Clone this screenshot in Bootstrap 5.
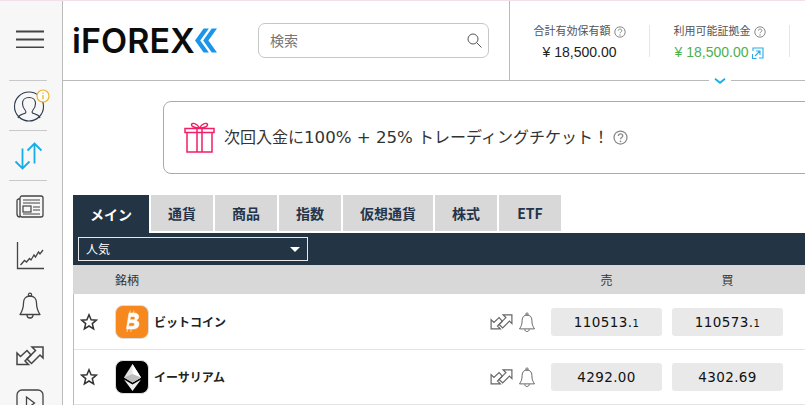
<!DOCTYPE html>
<html lang="ja">
<head>
  <meta charset="UTF-8">
  <title>iFOREX</title>
  <link href="https://cdn.jsdelivr.net/npm/bootstrap@5.3.0/dist/css/bootstrap.min.css" rel="stylesheet">
  <style>
    html, body { height: 405px; overflow: hidden; }
    body {
      background: #fff;
      border-top: 1px solid #f1dfe9;
      font-family: "Liberation Sans", "Noto Sans CJK JP", sans-serif;
      color: #222;
    }
    .app-shell { height: 404px; }
    .side-rail {
      width: 63px;
      flex: 0 0 63px;
      background: #f7f7f7;
      border-right: 1px solid #bbb;
      padding-top: 27px;
      overflow: hidden;
    }
    .rail-item { height: 50px; display: flex; align-items: center; justify-content: center; flex: 0 0 auto; }
    .rail-first { height: 53px; flex: 0 0 auto; border-bottom: 1px solid #c8c8c8; margin: 0 15px 0 9px; padding-left: 3px; }
    .rail-line { border-bottom: 1px solid #c8c8c8; margin: 0 15px 0 9px; padding-left: 2px; }
    .rail-plain { padding-right: 3px; }
    .rail-user { overflow: visible; }
    .main-pane { width: 742px; flex: 0 0 742px; overflow: hidden; }
    .top-bar { height: 80px; border-bottom: 1px solid #bbb; position: relative; flex: 0 0 auto; }
    .brand-box { width: 195px; padding-left: 9px; }
    .brand-word { font-family: "Inter", sans-serif; font-weight: 600; font-size: 34px; line-height: 1; letter-spacing: .1px; color: #0c0c0c; }
    .search-box { width: 231px; height: 35px; margin-top: 22px; position: relative; }
    .search-box .form-control {
      height: 35px; border: 1px solid #c6c6c6; border-radius: 7px; padding: 0 30px 0 11px; font-size: 14px;
    }
    .search-box .form-control::placeholder { color: #757575; }
    .search-glass { position: absolute; right: 6px; top: 9px; }
    .stats-box { margin-left: 20px; border-left: 1px solid #bbb; height: 79px; padding-top: 24px; }
    .stat-cell { width: 140px; height: 32px; border-right: 1px solid #e6e6e6; text-align: center; }
    .stat-label { font-size: 11px; line-height: 15px; color: #555; display: flex; justify-content: center; align-items: center; gap: 3px; height: 13px; }
    .stat-value { font-size: 14px; line-height: 16px; margin-top: 6px; color: #222; }
    .stat-green { color: #4caf50; }
    .stat-green svg { vertical-align: -2px; }
    .expand-tab { position: absolute; left: 646px; top: 75px; width: 22px; height: 10px; background: #fff; display: flex; justify-content: center; align-items: center; }
    .promo-box {
      margin: 20px 0 0 100px; width: 700px; height: 73px;
      border: 1px solid #aaa; border-radius: 8px; padding-left: 20px; gap: 9px;
      color: #333; flex: 0 0 auto;
    }
    .promo-text { font-family: "Noto Sans CJK JP", sans-serif; font-size: 16px; }
    .promo-num { font-family: "DejaVu Sans", sans-serif; font-size: 16.600px; }
    .promo-help { margin-left: -5px; flex-shrink: 0; }
    .market-wrap { margin: 21px 0 0 10px; width: 740px; flex: 0 0 auto; }
    .market-tabs { gap: 2px; height: 38px; }
    .market-tab {
      height: 36px; width: 62px; background: #d8d8d8; color: #24344a; font-weight: 700; font-size: 14px;
      display: flex; align-items: center; justify-content: center; font-family: "Noto Sans CJK JP", sans-serif;
    }
    .market-tab-on { height: 38px; width: 76px; background: #233444; color: #fff; }
    .market-tab-wide { width: 90px; }
    .filter-bar { background: #233444; height: 32px; padding: 4px 5px; }
    .filter-pick {
      width: 230px; height: 24px; border: 1px solid #e8e8e8; color: #fff; font-size: 12px;
      font-family: "Noto Sans CJK JP", sans-serif; padding: 0 7px 0 7px;
    }
    .filter-caret { width: 0; height: 0; border-left: 5.500px solid transparent; border-right: 5.500px solid transparent; border-top: 5.500px solid #fff; }
    .quote-list { border-left: 1px solid #bbb; }
    .quote-head { background: #d8d8d8; height: 29px; margin-bottom: 1px; font-size: 12px; color: #333; font-family: "Noto Sans CJK JP", sans-serif; margin-left: -1px; }
    .col-name { width: 478px; padding-left: 42px; }
    .col-price { width: 111px; margin-right: 10px; text-align: center; }
    .quote-row { height: 55px; border-bottom: 1px solid #e4e4e4; }
    .star-cell { width: 41px; flex: 0 0 41px; padding-left: 6px; display: flex; }
    .coin-logo { width: 34px; height: 34px; flex: 0 0 34px; border-radius: 8px; display: flex; align-items: center; justify-content: center; border: 1px solid #ddd; }
    .coin-orange { background: #f7881d; }
    .coin-black { background: #000; }
    .coin-name { width: 341px; flex: 0 0 341px; padding-left: 5px; font-weight: 700; font-size: 12px; font-family: "Noto Sans CJK JP", sans-serif; color: #222; }
    .tool-cell { width: 61px; flex: 0 0 61px; gap: 5px; color: #666; }
    .price-btn {
      width: 111px; flex: 0 0 111px; height: 28px; margin-right: 10px; padding: 0; border: 0; border-radius: 3px; background: #e9e9e9;
      font-family: "DejaVu Sans", sans-serif; font-size: 13.500px; line-height: 28px; color: #111; letter-spacing: .4px;
    }
    .price-small { font-size: 10px; }
    .rail-ink { color: #444; }
  </style>
</head>
<body>
  <svg width="0" height="0" class="position-absolute">
    <symbol id="qmark" viewBox="0 0 12 12">
      <circle cx="6" cy="6" r="5.200" fill="none" stroke="#888" stroke-width="1"/>
      <path d="M4.300 4.700c0-2.200 3.500-2.200 3.500 0 0 1.300-1.800 1.200-1.800 2.600" fill="none" stroke="#888" stroke-width="1"/>
      <circle cx="6" cy="9" r=".7" fill="#888"/>
    </symbol>
    <symbol id="swap" viewBox="0 0 28 20">
      <path d="M1 7V18.500H12.500L9 15 15 9 11 4.500 4.500 10.500Z" fill="none" stroke="currentColor" stroke-width="1.500" stroke-linejoin="miter"/>
      <path d="M27 1H16L19.500 4.500 11 13 15.500 17.500 24 9 27 12Z" fill="none" stroke="currentColor" stroke-width="1.500" stroke-linejoin="miter"/>
    </symbol>
    <symbol id="bell" viewBox="0 0 24 28">
      <path d="M12 4c-4 0-6.500 2.800-6.500 7 0 6-1.500 8.500-3.500 11.500h20c-2-3-3.500-5.500-3.500-11.500 0-4.200-2.500-7-6.500-7z" fill="none" stroke="currentColor" stroke-width="1.300" stroke-linejoin="round"/>
      <circle cx="12" cy="2.800" r="1.600" fill="none" stroke="currentColor" stroke-width="1.200"/>
      <path d="M9 23c0 4 6 4 6 0" fill="none" stroke="currentColor" stroke-width="1.300"/>
    </symbol>
    <symbol id="star" viewBox="0 0 18 18">
      <path d="M9 1.800l2.100 5 5.300.4-4.100 3.400 1.300 5.200L9 13l-4.600 2.800 1.300-5.200-4.100-3.400 5.300-.4z" fill="none" stroke="#333" stroke-width="1.500" stroke-linejoin="miter"/>
    </symbol>
  </svg>

  <div class="app-shell d-flex">
    <nav class="side-rail d-flex flex-column">
      <div class="rail-first d-flex align-items-start justify-content-center">
        <svg width="30" height="20" viewBox="0 0 30 20"><path d="M1 3.500h28M1 11.500h28M1 19.500h28" stroke="#444" stroke-width="2"/></svg>
      </div>
      <div class="rail-item rail-line">
        <svg class="rail-user" width="38" height="34" viewBox="0 0 38 34">
          <circle cx="19" cy="17.500" r="14.500" fill="none" stroke="#2d3b4d" stroke-width="1.100"/>
          <path d="M8 29c1-3.500 5-3.500 7.500-5 .8-.8.3-2-.5-3-1.800-2-2.500-4-2.500-6.500 0-3.500 2.500-6 6.500-6s6.500 2.500 6.500 6c0 2.500-.7 4.500-2.500 6.500-.8 1-1.300 2.200-.5 3 2.500 1.500 6.500 1.500 7.500 5" fill="none" stroke="#2d3b4d" stroke-width="1.100"/>
          <circle cx="33" cy="7" r="6" fill="#fff" stroke="#f0b429" stroke-width="1.200"/>
          <path d="M33 6v4.300M33 3.500v1.300" stroke="#f0b429" stroke-width="1.300"/>
        </svg>
      </div>
      <div class="rail-item rail-line">
        <svg width="30" height="30" viewBox="0 0 30 30"><path d="M8.500 7.500v20M1.500 20.500l7 7 7-7M20.500 22.500v-20M13.500 9.500l7-7 7 7" fill="none" stroke="#14aeea" stroke-width="1.800"/></svg>
      </div>
      <div class="rail-item rail-plain">
        <svg width="28" height="23" viewBox="0 0 28 23"><rect x="4" y="1" width="23" height="21" rx="2" fill="none" stroke="#444" stroke-width="1.300"/><path d="M4 4H3C1.500 4 1 5 1 6v13c0 2 1.500 3 3 3" fill="none" stroke="#444" stroke-width="1.300"/><path d="M7 5h17M7 8h17M17 12h7M17 15h7M7 19h17" stroke="#444" stroke-width="1.200"/><rect x="7" y="11" width="8" height="6" fill="none" stroke="#444" stroke-width="1.200"/></svg>
      </div>
      <div class="rail-item rail-plain">
        <svg width="28" height="28" viewBox="0 0 28 28"><path d="M1.500 0v26.500H28" fill="none" stroke="#444" stroke-width="1.300"/><path d="M4.500 23l4-4.500 2 1.500 3-3.500 1.500 1.500 3-5 1.500 2 3-5 1.500 2 3-4" fill="none" stroke="#444" stroke-width="1.300"/></svg>
      </div>
      <div class="rail-item rail-plain rail-ink">
        <svg width="24" height="28"><use href="#bell"/></svg>
      </div>
      <div class="rail-item rail-plain rail-ink">
        <svg width="28" height="20"><use href="#swap"/></svg>
      </div>
      <div class="rail-item rail-plain align-items-start pt-2">
        <svg width="28" height="28" viewBox="0 0 28 28"><rect x="1" y="1" width="26" height="26" rx="5" fill="none" stroke="#444" stroke-width="1.300"/><path d="M10.500 8v12l8-6z" fill="none" stroke="#444" stroke-width="1.300"/></svg>
      </div>
    </nav>

    <main class="main-pane d-flex flex-column">
      <header class="top-bar d-flex">
        <div class="brand-box d-flex align-items-center">
          <span class="brand-word">iFOREX</span>
          <svg width="22" height="25" viewBox="0 0 23 25" class="flex-shrink-0"><path d="M9 0h5.500L5.500 12.500 14.500 25H9L0 12.500zM17.500 0H23l-9 12.500L23 25h-5.500l-9-12.500z" fill="#1b95ea"/></svg>
        </div>
        <div class="search-box">
          <input class="form-control" type="text" placeholder="検索">
          <svg class="search-glass" width="17" height="17" viewBox="0 0 17 17"><circle cx="7" cy="7" r="5" fill="none" stroke="#555" stroke-width="1"/><path d="M10.500 10.500l5 5" stroke="#555" stroke-width="1"/></svg>
        </div>
        <div class="stats-box d-flex">
          <div class="stat-cell">
            <div class="stat-label">合計有効保有額 <svg width="12" height="12"><use href="#qmark"/></svg></div>
            <div class="stat-value">¥ 18,500.00</div>
          </div>
          <div class="stat-cell">
            <div class="stat-label">利用可能証拠金 <svg width="12" height="12"><use href="#qmark"/></svg></div>
            <div class="stat-value stat-green">¥ 18,500.00 <svg width="12" height="12" viewBox="0 0 12 12"><path d="M1 4V1h10v10H7M4 4h4v4M8 4L3 9M0.500 7v4.500h4" fill="none" stroke="#29abe2" stroke-width="1.100"/></svg></div>
          </div>
        </div>
        <div class="expand-tab">
          <svg width="12" height="6" viewBox="0 0 12 6"><path d="M1 .8l5 4 5-4" fill="none" stroke="#14aeea" stroke-width="1.800"/></svg>
        </div>
      </header>

      <section class="promo-box d-flex align-items-center">
        <svg width="31" height="31" viewBox="0 0 31 31" class="flex-shrink-0">
          <path d="M3 10.500h25V30H3zM1 6.500h29v4H1zM13 6.500h5V30h-5z" fill="none" stroke="#f01f68" stroke-width="1.500"/>
          <path d="M15.500 6C11 6 7 4.500 7.500 2.500S13 1 15.500 6zM15.500 6c4.500 0 8.500-1.500 8-3.500S18 1 15.500 6z" fill="none" stroke="#f01f68" stroke-width="1.400"/>
        </svg>
        <span class="promo-text">次回入金に<span class="promo-num">100% + 25% </span>トレーディングチケット！</span>
        <svg width="15" height="15" class="promo-help"><use href="#qmark"/></svg>
      </section>

      <section class="market-wrap">
        <div class="market-tabs d-flex align-items-start">
          <div class="market-tab market-tab-on">メイン</div>
          <div class="market-tab">通貨</div>
          <div class="market-tab">商品</div>
          <div class="market-tab">指数</div>
          <div class="market-tab market-tab-wide">仮想通貨</div>
          <div class="market-tab">株式</div>
          <div class="market-tab">ETF</div>
        </div>
        <div class="filter-bar">
          <div class="filter-pick d-flex align-items-center justify-content-between">
            <span>人気</span><span class="filter-caret"></span>
          </div>
        </div>
        <div class="quote-list">
          <div class="quote-head d-flex align-items-center">
            <div class="col-name">銘柄</div>
            <div class="col-price">売</div>
            <div class="col-price">買</div>
          </div>
          <div class="quote-row d-flex align-items-center">
            <div class="star-cell"><svg width="18" height="18"><use href="#star"/></svg></div>
            <div class="coin-logo coin-orange">
              <svg width="20" height="26" viewBox="0 0 20 26"><path d="M7 4h5.500c5 0 5.500 6 1.500 7.300 4.500 1 4 8.700-2.500 8.700H4.500zM8.700 7.500l-.9 3.300h3.500c2.400 0 2.400-3.300 0-3.300zM7.300 13.700l-1 3.500h4.200c2.800 0 2.800-3.500 0-3.500zM8.300 1.500l-.8 3M12 1.500l-.8 3M5.800 19l-.8 4M9.500 19l-.8 4" fill="#fff" fill-rule="evenodd" stroke="#fff" stroke-width=".6"/></svg>
            </div>
            <div class="coin-name">ビットコイン</div>
            <div class="tool-cell d-flex align-items-center">
              <svg width="23" height="16"><use href="#swap"/></svg>
              <svg width="18" height="21"><use href="#bell"/></svg>
            </div>
            <button class="price-btn">110513.<span class="price-small">1</span></button>
            <button class="price-btn">110573.<span class="price-small">1</span></button>
          </div>
          <div class="quote-row d-flex align-items-center">
            <div class="star-cell"><svg width="18" height="18"><use href="#star"/></svg></div>
            <div class="coin-logo coin-black">
              <svg width="17" height="27" viewBox="0 0 17 27"><path d="M8.500 0L0 13.500l8.500 5 8.500-5z" fill="#e4e4e4"/><path d="M8.500 0v18.500l8.500-5z" fill="#fff"/><path d="M0 15.500L8.500 27 17 15.500l-8.500 5z" fill="#eee"/><path d="M0 13.500l8.500-3.600 8.500 3.600-8.500 5z" fill="#bdbdbd"/></svg>
            </div>
            <div class="coin-name">イーサリアム</div>
            <div class="tool-cell d-flex align-items-center">
              <svg width="23" height="16"><use href="#swap"/></svg>
              <svg width="18" height="21"><use href="#bell"/></svg>
            </div>
            <button class="price-btn">4292.00</button>
            <button class="price-btn">4302.69</button>
          </div>
        </div>
      </section>
    </main>
  </div>
  <script src="https://cdn.jsdelivr.net/npm/bootstrap@5.3.0/dist/js/bootstrap.bundle.min.js"></script>
</body>
</html>
